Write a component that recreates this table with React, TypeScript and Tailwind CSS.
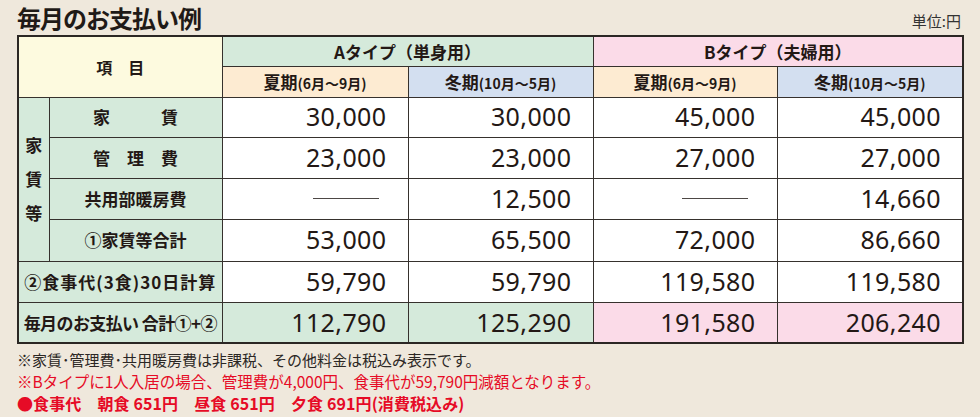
import React from 'react';

const rentRows = [
  { label: '家　　　賃', vals: ['30,000', '30,000', '45,000', '45,000'] },
  { label: '管　理　費', vals: ['23,000', '23,000', '27,000', '27,000'] },
  { label: '共用部暖房費', vals: [null, '12,500', null, '14,660'] },
  { label: '①家賃等合計', vals: ['53,000', '65,500', '72,000', '86,660'] },
];

const foodVals = ['59,790', '59,790', '119,580', '119,580'];
const totalVals = ['112,790', '125,290', '191,580', '206,240'];

const line = 'border border-[#36312d]';
const num =
  "text-right pr-[21px] font-[family-name:'Noto_Sans',sans-serif] text-[25px] tracking-[0.4px] text-[#231815]";

function NumCell({ value, bg = 'bg-white' }: { value: string | null; bg?: string }) {
  return (
    <td className={`${line} ${bg} ${num}`}>
      {value ?? <div className="ml-auto mr-[8px] h-[1.5px] w-[66px] bg-[#4d4845]" />}
    </td>
  );
}

function Season({ name, range }: { name: string; range: string }) {
  return (
    <span className="font-bold">
      <span className="text-[17px]">{name}</span>
      <span className="text-[14px]">{range}</span>
    </span>
  );
}

export default function App() {
  return (
    <div className="h-[417px] w-[980px] overflow-hidden bg-[#efe8dc] px-[17px] pt-[1px] text-[#231815] font-[family-name:'Noto_Sans_CJK_JP',sans-serif]">
      <div className="flex h-[34px] items-center justify-between">
        <h1 className="text-[24px] font-bold leading-none tracking-[-1px] text-[#1f1a17]">毎月のお支払い例</h1>
        <span className="mt-[6px] mr-[2px] text-[15px] text-[#333]">単位:円</span>
      </div>

      <table className="w-[945px] table-fixed border-collapse border-2 border-[#2b2724]">
        <colgroup>
          <col className="w-[31px]" />
          <col className="w-[173px]" />
          <col className="w-[186px]" />
          <col className="w-[185px]" />
          <col className="w-[184px]" />
          <col className="w-[186px]" />
        </colgroup>
        <thead>
          <tr className="h-[30px]">
            <th colSpan={2} rowSpan={2} className={`${line} bg-[#fdfadf] text-[16px] font-bold`}>
              項　目
            </th>
            <th colSpan={2} className={`${line} bg-[#d5eadb] text-[17px] font-bold`}>
              Aタイプ（単身用）
            </th>
            <th colSpan={2} className={`${line} bg-[#fbdbe8] text-[17px] font-bold`}>
              Bタイプ（夫婦用）
            </th>
          </tr>
          <tr className="h-[31px]">
            <th className={`${line} bg-[#fdebd2]`}>
              <Season name="夏期" range="(6月〜9月)" />
            </th>
            <th className={`${line} bg-[#d3dff0]`}>
              <Season name="冬期" range="(10月〜5月)" />
            </th>
            <th className={`${line} bg-[#fdebd2]`}>
              <Season name="夏期" range="(6月〜9月)" />
            </th>
            <th className={`${line} bg-[#d3dff0]`}>
              <Season name="冬期" range="(10月〜5月)" />
            </th>
          </tr>
        </thead>
        <tbody>
          {rentRows.map((row, i) => (
            <tr key={row.label} className={i === 0 ? 'h-[40px]' : i === 3 ? 'h-[42px]' : 'h-[41px]'}>
              {i === 0 && (
                <td rowSpan={4} className={`${line} bg-[#d5eadb] text-center text-[17px] font-bold leading-[34px]`}>
                  家<br />賃<br />等
                </td>
              )}
              <td className={`${line} bg-[#d5eadb] text-center text-[17px] font-bold`}>{row.label}</td>
              {row.vals.map((v, j) => (
                <NumCell key={j} value={v} />
              ))}
            </tr>
          ))}
          <tr className="h-[41px]">
            <td colSpan={2} className={`${line} bg-[#d5eadb] text-center text-[17px] font-bold tracking-[1px]`}>
              ②食事代(3食)30日計算
            </td>
            {foodVals.map((v, j) => (
              <NumCell key={j} value={v} />
            ))}
          </tr>
          <tr className="h-[41px]">
            <td colSpan={2} className={`${line} bg-[#d5eadb] text-center text-[17px] font-bold tracking-[-0.6px]`}>
              毎月のお支払い 合計①+②
            </td>
            {totalVals.map((v, j) => (
              <NumCell key={j} value={v} bg={j < 2 ? 'bg-[#d5eadb]' : 'bg-[#fbdbe8]'} />
            ))}
          </tr>
        </tbody>
      </table>

      <div className="mt-[5px] flex flex-col gap-[1px] leading-[21px]">
        <p className="text-[15px] text-[#2b2724]">※家賃･管理費･共用暖房費は非課税、その他料金は税込み表示です。</p>
        <p className="text-[15.5px] text-[#e60b26]">※Bタイプに1人入居の場合、管理費が4,000円、食事代が59,790円減額となります。</p>
        <p className="text-[16px] font-bold tracking-[0.1px] text-[#e60b26]">●食事代　朝食 651円　昼食 651円　夕食 691円(消費税込み)</p>
      </div>
    </div>
  );
}
